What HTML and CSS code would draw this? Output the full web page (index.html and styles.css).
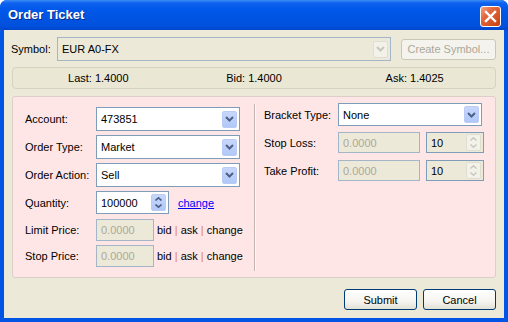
FILE: index.html
```html
<!DOCTYPE html>
<html lang="en">
<head>
    <meta charset="UTF-8">
    <title>Order Ticket</title>
    <link rel="stylesheet" href="styles.css">
</head>
<body>
    <div class="window">
        <div class="titlebar">
            <span class="title">Order Ticket</span>
            <span class="close-btn">
                <svg width="13" height="13" viewBox="0 0 13 13"><path d="M2 2 L11 11 M11 2 L2 11" stroke="#fff" stroke-width="2.4" stroke-linecap="square"/></svg>
            </span>
        </div>
        <div class="client">
            <div class="symbol-row">
                <span class="symbol-label">Symbol:</span>
                <div class="combo combo-symbol disabled">
                    <span class="combo-value">EUR A0-FX</span>
                    <span class="combo-btn"><svg width="9" height="6" viewBox="0 0 9 6"><path d="M1 1 L4.5 4.5 L8 1" fill="none" stroke="#C9C7BA" stroke-width="2"/></svg></span>
                </div>
                <button class="btn btn-create" disabled>Create Symbol...</button>
            </div>

            <div class="price-bar">
                <span class="price-last">Last: 1.4000</span>
                <span>Bid: 1.4000</span>
                <span>Ask: 1.4025</span>
            </div>

            <div class="order-panel">
                <div class="col-left">
                    <div class="row row-24">
                        <label>Account:</label>
                        <div class="combo combo-wide">
                            <span class="combo-value">473851</span>
                            <span class="combo-btn"><svg width="9" height="6" viewBox="0 0 9 6"><path d="M1 1 L4.5 4.5 L8 1" fill="none" stroke="#4D6185" stroke-width="2"/></svg></span>
                        </div>
                    </div>
                    <div class="row row-24">
                        <label>Order Type:</label>
                        <div class="combo combo-wide">
                            <span class="combo-value">Market</span>
                            <span class="combo-btn"><svg width="9" height="6" viewBox="0 0 9 6"><path d="M1 1 L4.5 4.5 L8 1" fill="none" stroke="#4D6185" stroke-width="2"/></svg></span>
                        </div>
                    </div>
                    <div class="row row-24">
                        <label>Order Action:</label>
                        <div class="combo combo-wide">
                            <span class="combo-value">Sell</span>
                            <span class="combo-btn"><svg width="9" height="6" viewBox="0 0 9 6"><path d="M1 1 L4.5 4.5 L8 1" fill="none" stroke="#4D6185" stroke-width="2"/></svg></span>
                        </div>
                    </div>
                    <div class="row row-qty">
                        <label>Quantity:</label>
                        <div class="spin spin-qty">
                            <span class="spin-value">100000</span>
                            <span class="spin-btns">
                                <svg width="7" height="4" viewBox="0 0 7 4"><path d="M0.5 3.5 L3.5 0.8 L6.5 3.5" fill="none" stroke="#4D6185" stroke-width="1.6"/></svg>
                                <svg width="7" height="4" viewBox="0 0 7 4"><path d="M0.5 0.5 L3.5 3.2 L6.5 0.5" fill="none" stroke="#4D6185" stroke-width="1.6"/></svg>
                            </span>
                        </div>
                        <a class="link" href="#">change</a>
                    </div>
                    <div class="row row-22">
                        <label>Limit Price:</label>
                        <div class="text-box disabled price-box">0.0000</div>
                        <span class="quick">bid <i>|</i> ask <i>|</i> change</span>
                    </div>
                    <div class="row row-22">
                        <label>Stop Price:</label>
                        <div class="text-box disabled price-box">0.0000</div>
                        <span class="quick">bid <i>|</i> ask <i>|</i> change</span>
                    </div>
                </div>

                <div class="divider"></div>

                <div class="col-right">
                    <div class="row row-bracket">
                        <label>Bracket Type:</label>
                        <div class="combo combo-bracket">
                            <span class="combo-value">None</span>
                            <span class="combo-btn"><svg width="9" height="6" viewBox="0 0 9 6"><path d="M1 1 L4.5 4.5 L8 1" fill="none" stroke="#4D6185" stroke-width="2"/></svg></span>
                        </div>
                    </div>
                    <div class="row row-21 row-stop">
                        <label>Stop Loss:</label>
                        <div class="text-box disabled bracket-box">0.0000</div>
                        <div class="spin spin-small disabled">
                            <span class="spin-value">10</span>
                            <span class="spin-btns">
                                <svg width="7" height="4" viewBox="0 0 7 4"><path d="M0.5 3.5 L3.5 0.8 L6.5 3.5" fill="none" stroke="#C9C7BA" stroke-width="1.4"/></svg>
                                <svg width="7" height="4" viewBox="0 0 7 4"><path d="M0.5 0.5 L3.5 3.2 L6.5 0.5" fill="none" stroke="#C9C7BA" stroke-width="1.4"/></svg>
                            </span>
                        </div>
                    </div>
                    <div class="row row-21">
                        <label>Take Profit:</label>
                        <div class="text-box disabled bracket-box">0.0000</div>
                        <div class="spin spin-small disabled">
                            <span class="spin-value">10</span>
                            <span class="spin-btns">
                                <svg width="7" height="4" viewBox="0 0 7 4"><path d="M0.5 3.5 L3.5 0.8 L6.5 3.5" fill="none" stroke="#C9C7BA" stroke-width="1.4"/></svg>
                                <svg width="7" height="4" viewBox="0 0 7 4"><path d="M0.5 0.5 L3.5 3.2 L6.5 0.5" fill="none" stroke="#C9C7BA" stroke-width="1.4"/></svg>
                            </span>
                        </div>
                    </div>
                </div>
            </div>

            <div class="actions">
                <button class="btn btn-action">Submit</button>
                <button class="btn btn-action">Cancel</button>
            </div>
        </div>
    </div>
</body>
</html>
```

FILE: styles.css
```css
body {
    margin: 0;
    background: #fff;
    font-family: "Liberation Sans", Arial, sans-serif;
    font-size: 11px;
    color: #000;
}
.window {
    width: 508px;
    height: 322px;
    box-sizing: border-box;
    display: flex;
    flex-direction: column;
    background: #0055E5;
    border-radius: 7px 7px 0 0;
    overflow: hidden;
}
.titlebar {
    height: 30px;
    flex: none;
    display: flex;
    align-items: center;
    justify-content: space-between;
    padding: 0 7px 0 8px;
    background: linear-gradient(to bottom, #3D8DF7 0, #0F62EE 3px, #0058EA 9px, #0054E3 55%, #0051DD 85%, #0046CC 100%);
}
.title {
    color: #fff;
    font-weight: bold;
    font-size: 13px;
    text-shadow: 1px 1px 0 #0A2A8A;
    margin-top: -1px;
}
.close-btn {
    width: 19px;
    height: 19px;
    margin-top: 2px;
    border: 1px solid #fff;
    border-radius: 3px;
    background: linear-gradient(135deg, #F0A183 0, #E2683F 35%, #C9400F 100%);
    display: flex;
    align-items: center;
    justify-content: center;
}
.client {
    flex: 1;
    margin: 0 4px 4px;
    background: #ECE9D8;
    padding: 7px 8px 0;
    display: flex;
    flex-direction: column;
}

.symbol-row {
    display: flex;
    align-items: center;
    margin-left: -1px;
}
.symbol-label {
    width: 46px;
}
.combo {
    display: flex;
    align-items: center;
    justify-content: space-between;
    box-sizing: border-box;
    border: 1px solid #7F9DB9;
    background: #fff;
    padding: 0 2px 0 4px;
}
.combo-btn {
    width: 15px;
    height: 17px;
    border-radius: 2px;
    background: linear-gradient(to bottom, #C7D7FC, #B1C8F8);
    border: 1px solid #BACCF5;
    box-sizing: border-box;
    display: flex;
    align-items: center;
    justify-content: center;
}
.combo.disabled {
    background: #ECE9D8;
    border-color: #A4B5C8;
}
.combo.disabled .combo-btn {
    background: #F2F1EA;
    border-color: #E0DED3;
}
.combo-symbol {
    width: 334px;
    height: 24px;
}
.btn-create {
    margin-left: 10px;
    width: 95px;
    height: 21px;
    color: #ACA899;
    border: 1px solid #C9C7BA;
    border-radius: 3px;
    background: #F4F3EE;
}
.btn {
    font-family: "Liberation Sans", Arial, sans-serif;
    font-size: 11px;
    padding: 0;
}

.price-bar {
    margin-top: 6px;
    height: 22px;
    box-sizing: border-box;
    border: 1px solid #D6D2C0;
    border-radius: 4px;
    background: #EAE7D5;
    display: grid;
    grid-template-columns: 1fr 1fr 1fr;
    align-items: center;
    text-align: center;
}
.price-last {
    padding-left: 10px;
}

.order-panel {
    margin-top: 7px;
    height: 182px;
    box-sizing: border-box;
    border: 1px solid #DCCFC8;
    border-radius: 3px;
    background: #FFE6E6;
    display: grid;
    grid-template-columns: 241px 2px 1fr;
}
.col-left {
    padding: 10px 0 0 12px;
}
.col-right {
    padding: 6px 0 0 8px;
}
.divider {
    margin: 7px 0 6px;
    border-left: 1px solid #C4B3B1;
    border-right: 1px solid #FFF7F7;
}
.row {
    display: flex;
    align-items: center;
}
.row label {
    flex: none;
}
.col-left .row label {
    width: 71px;
}
.col-right .row label {
    width: 74px;
}
.row-24 {
    height: 24px;
    margin-bottom: 4px;
}
.row-qty {
    height: 23px;
    margin-bottom: 5px;
}
.row-22 {
    height: 22px;
    margin-bottom: 4px;
}
.row-bracket {
    height: 23px;
    margin-bottom: 6px;
}
.row-21 {
    height: 21px;
}
.row-stop {
    margin-bottom: 7px;
}
.combo-wide {
    width: 144px;
    height: 24px;
}
.combo-bracket {
    width: 144px;
    height: 23px;
}

.spin {
    display: flex;
    align-items: center;
    justify-content: space-between;
    box-sizing: border-box;
    border: 1px solid #7F9DB9;
    background: #fff;
    padding: 0 2px 0 4px;
}
.spin-btns {
    width: 15px;
    height: 17px;
    display: flex;
    flex-direction: column;
    align-items: center;
    justify-content: space-evenly;
    border-radius: 2px;
    background: linear-gradient(to bottom, #C7D7FC, #B1C8F8);
    border: 1px solid #BACCF5;
    box-sizing: border-box;
}
.spin.disabled {
    background: #ECE9D8;
}
.spin.disabled .spin-btns {
    background: #F2F1EA;
    border-color: #E0DED3;
}
.spin-qty {
    width: 73px;
    height: 23px;
}
.spin-small {
    width: 58px;
    height: 21px;
    margin-left: 6px;
}
.link {
    margin-left: 9px;
    color: #0000FF;
    text-decoration: underline;
}

.text-box {
    box-sizing: border-box;
    border: 1px solid #7F9DB9;
    background: #fff;
    padding: 0 4px;
    display: flex;
    align-items: center;
}
.text-box.disabled {
    background: #ECE9D8;
    border-color: #A4B5C8;
    color: #ACA899;
}
.price-box {
    width: 58px;
    height: 22px;
}
.bracket-box {
    width: 82px;
    height: 21px;
}
.quick {
    margin-left: 3px;
}
.quick i {
    font-style: normal;
    color: #E0892C;
}

.actions {
    margin-top: 11px;
    display: flex;
    justify-content: flex-end;
    gap: 6px;
}
.btn-action {
    width: 73px;
    height: 21px;
    border: 1px solid #003C74;
    border-radius: 3px;
    color: #000;
    background: linear-gradient(to bottom, #FFFFFF 0, #F5F4EF 60%, #E3E1D6 100%);
}
```
